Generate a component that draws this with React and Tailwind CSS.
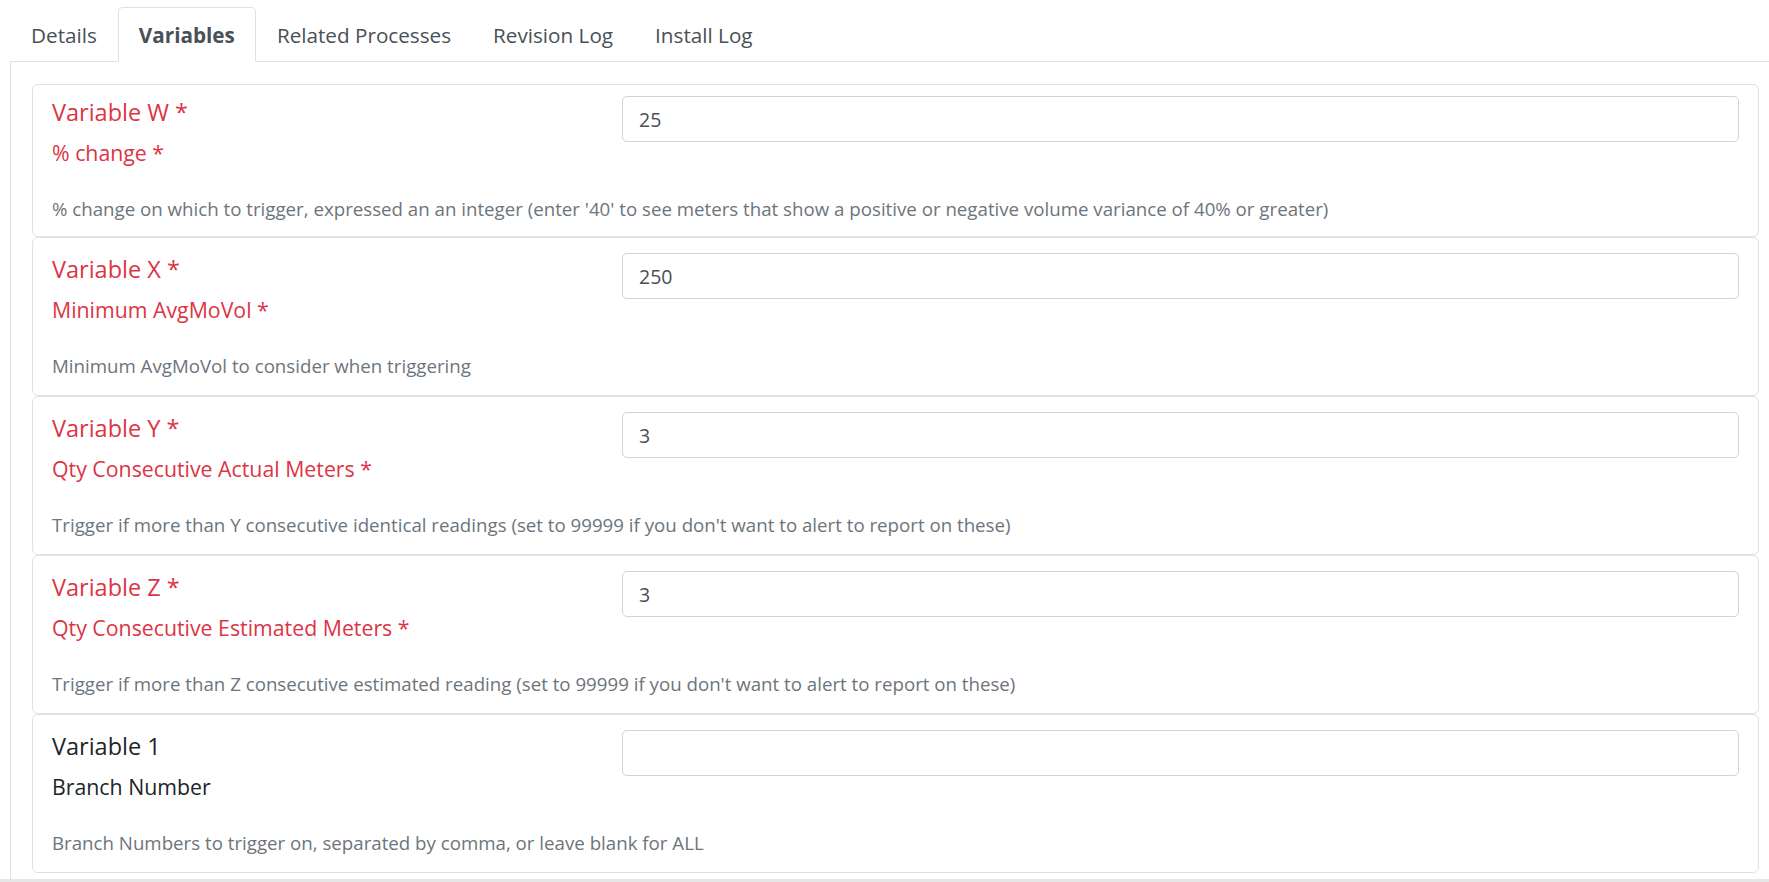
import React from "react";

const tabs = ["Details", "Variables", "Related Processes", "Revision Log", "Install Log"];

const variables = [
  {
    name: "Variable W",
    label: "% change",
    value: "25",
    required: true,
    help: "% change on which to trigger, expressed an an integer (enter '40' to see meters that show a positive or negative volume variance of 40% or greater)",
  },
  {
    name: "Variable X",
    label: "Minimum AvgMoVol",
    value: "250",
    required: true,
    help: "Minimum AvgMoVol to consider when triggering",
  },
  {
    name: "Variable Y",
    label: "Qty Consecutive Actual Meters",
    value: "3",
    required: true,
    help: "Trigger if more than Y consecutive identical readings (set to 99999 if you don't want to alert to report on these)",
  },
  {
    name: "Variable Z",
    label: "Qty Consecutive Estimated Meters",
    value: "3",
    required: true,
    help: "Trigger if more than Z consecutive estimated reading (set to 99999 if you don't want to alert to report on these)",
  },
  {
    name: "Variable 1",
    label: "Branch Number",
    value: "",
    required: false,
    help: "Branch Numbers to trigger on, separated by comma, or leave blank for ALL",
  },
];

const VariableCard = ({ item, first }) => {
  const tone = item.required ? "text-[#dc3545]" : "text-[#212529]";
  return (
    <div
      className={`border border-[#dee2e6] rounded-[6px] bg-white px-[19px] ${
        first ? "pt-[11px] pb-[14px]" : "pt-[15px] pb-[16px]"
      }`}
    >
      <div className="flex">
        <div className="w-[570px] shrink-0">
          <div className={`mt-[2px] text-[23.5px] leading-[28px] font-medium ${tone}`}>
            {item.name}
            {item.required && " *"}
          </div>
          <div className={`mt-[12px] text-[21.3px] leading-[30px] font-normal ${tone}`}>
            {item.label}
            {item.required && " *"}
          </div>
        </div>
        <div className="flex-1">
          <input
            type="text"
            defaultValue={item.value}
            className="block w-full h-[46px] px-[16px] border border-[#ced4da] rounded-[5px] text-[19.5px] text-[#495057] outline-none"
          />
        </div>
      </div>
      <div className="mt-[28px] text-[18.7px] leading-[26px] text-[#6c757d]">
        {item.help}
      </div>
    </div>
  );
};

export default function App() {
  return (
    <div className="h-[882px] w-full overflow-hidden bg-white flex flex-col font-['Open_Sans',sans-serif]">
      <div className="flex-1 flex flex-col pl-[10px] w-[1780px] min-h-0">
        {/* Tabs */}
        <ul className="flex pt-[7px] border-b border-[#dee2e6]">
          {tabs.map((tab) => (
            <li key={tab} className="-mb-px">
              <a
                href="#"
                className={
                  tab === "Variables"
                    ? "block px-[20px] pt-[12px] pb-[11px] text-[20.7px] leading-[30px] border border-[#dee2e6] border-b-white rounded-t-[5px] bg-white font-bold text-[#495057]"
                    : "block px-[20px] pt-[12px] pb-[11px] text-[20.7px] leading-[30px] border border-transparent text-[#495057]"
                }
              >
                {tab}
              </a>
            </li>
          ))}
        </ul>

        {/* Tab content */}
        <div className="flex-1 border-l border-[#dee2e6] pt-[22px] pl-[21px] pr-[21px]">
          {variables.map((v, i) => (
            <VariableCard key={v.name} item={v} first={i === 0} />
          ))}
        </div>
      </div>
      <div className="h-[3px] bg-[#e6e6e6]" />
    </div>
  );
}
